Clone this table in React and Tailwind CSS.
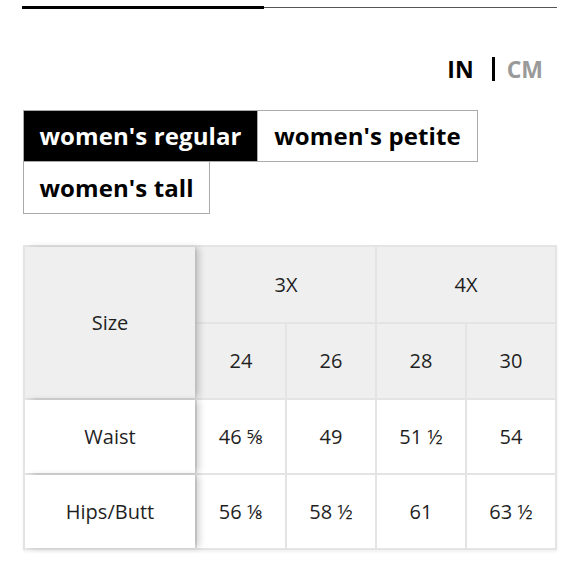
import React from "react";

const sizes = ["24", "26", "28", "30"];
const rows = [
  { label: "Waist", values: ["46 ⅝", "49", "51 ½", "54"] },
  { label: "Hips/Butt", values: ["56 ⅛", "58 ½", "61", "63 ½"] },
];

const Cell = ({ children, className = "" }) => (
  <div className={`flex items-center justify-center ${className}`}>{children}</div>
);

const App = () => {
  return (
    <div className="w-[580px] h-[580px] bg-white pl-[22px] pr-[23px] pt-[6px] font-['Open_Sans',sans-serif] text-[#1a1a1a]">
      <div className="flex items-center h-[3px]">
        <div className="w-[242px] h-[3px] bg-black" />
        <div className="flex-1 h-[1.5px] bg-[#555]" />
      </div>

      <div className="flex justify-end items-center mt-[48px] mr-[14px] h-[24px] text-[23px] font-bold leading-none">
        <span className="text-black">IN</span>
        <span className="w-[3px] h-[24px] bg-black ml-[18px] mr-[12px]" />
        <span className="text-[#9a9a9a]">CM</span>
      </div>

      <div className="mt-[29px] ml-[1px] flex flex-wrap w-[480px] text-[24px] font-bold tracking-[0.1px]">
        <button className="h-[52px] w-[235px] bg-black text-white border border-[#aaa] flex items-center justify-center">
          women's regular
        </button>
        <button className="h-[52px] w-[220px] bg-white text-black border border-[#aaa] border-l-0 flex items-center justify-center">
          women's petite
        </button>
        <button className="h-[52px] w-[187px] bg-white text-black border border-[#aaa] border-t-0 flex items-center justify-center">
          women's tall
        </button>
      </div>

      <div className="mt-[31px] ml-[1px] shadow-[0_2px_3px_rgba(0,0,0,0.06)]">
        <div className="grid grid-cols-[170px_repeat(4,1fr)] grid-rows-[75px_74px_73px_73px] gap-[2px] p-[2px] bg-[#e4e4e4] text-[20px] text-[#1f1f1f]">
          <Cell className="row-span-2 bg-[#efefef] relative z-10 shadow-[5px_0_7px_-1px_rgba(0,0,0,0.2)]">
            Size
          </Cell>
          <Cell className="col-span-2 bg-[#efefef]">3X</Cell>
          <Cell className="col-span-2 bg-[#efefef]">4X</Cell>
          {sizes.map((s) => (
            <Cell key={s} className="bg-[#efefef]">
              {s}
            </Cell>
          ))}
          {rows.map((r) => (
            <React.Fragment key={r.label}>
              <Cell className="bg-white relative z-10 shadow-[5px_0_7px_-1px_rgba(0,0,0,0.2)]">
                {r.label}
              </Cell>
              {r.values.map((v, i) => (
                <Cell key={i} className="bg-white">
                  {v}
                </Cell>
              ))}
            </React.Fragment>
          ))}
        </div>
      </div>
    </div>
  );
};

export default App;
